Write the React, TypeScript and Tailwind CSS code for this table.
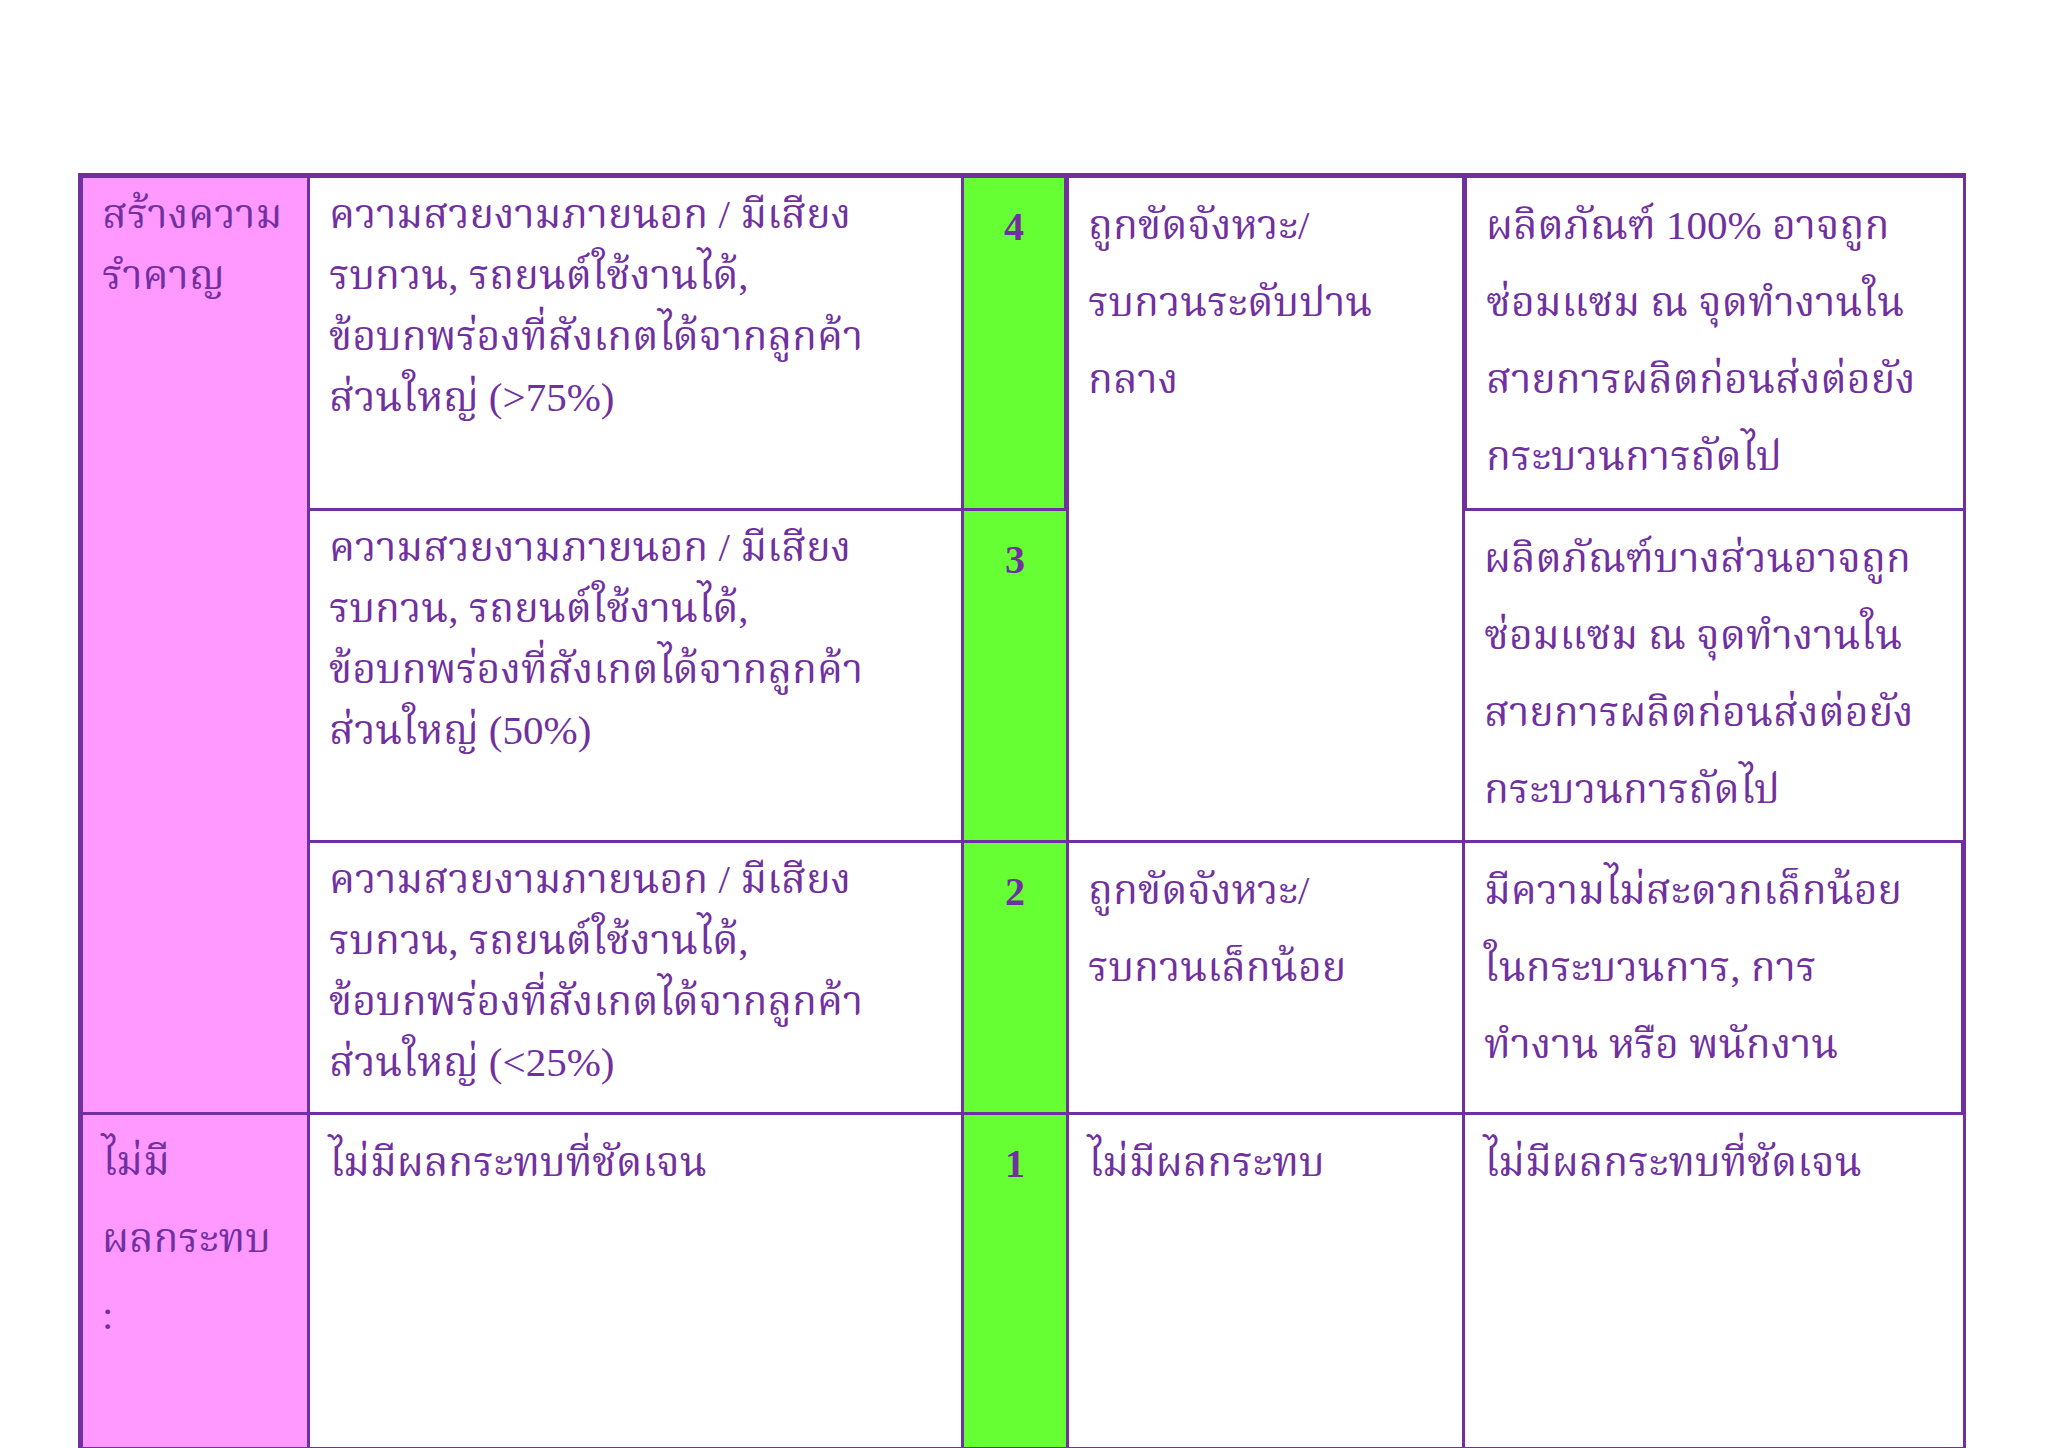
const purple = "text-[#7030A0]";

function Lines({ lines, lh }: { lines: string[]; lh: string }) {
  return (
    <div className={`${lh} whitespace-nowrap`}>
      {lines.map((l, i) => (
        <div key={i}>{l}</div>
      ))}
    </div>
  );
}

const desc = (pct: string) => [
  "ความสวยงามภายนอก / มีเสียง",
  "รบกวน, รถยนต์ใช้งานได้,",
  "ข้อบกพร่องที่สังเกตได้จากลูกค้า",
  `ส่วนใหญ่ (${pct})`,
];

const repair = (first: string) => [first, "ซ่อมแซม ณ จุดทำงานใน", "สายการผลิตก่อนส่งต่อยัง", "กระบวนการถัดไป"];

export default function App() {
  const cell = "bg-white px-[19px] pt-[9px]";
  const tightCell = "bg-white px-[19px] pt-[6px]";
  const tight = "leading-[61px]";
  const loose = "leading-[77px]";
  const num = "bg-[#66FF33] text-center pt-[10px] font-bold text-[40px] leading-[77px]";

  return (
    <div className="h-[1448px] w-[2048px] overflow-hidden bg-white">
      <div
        className={`ml-[78px] mt-[173px] grid w-[1888px] grid-cols-[224px_651px_102px_393px_498px] grid-rows-[330px_329px_269px_332px] gap-[3px] bg-[#7030A0] pt-[5px] pb-[3px] pl-[5px] pr-[3px] ${purple} text-[41px] [font-family:'Liberation_Serif','Kinnari','Norasi','Noto_Serif_Thai','Noto_Sans_Thai',serif]`}
      >
        {/* row 1 */}
        <div className="row-span-3 bg-[#FF99FF] px-[19px] pt-[6px]">
          <Lines lh={tight} lines={["สร้างความ", "รำคาญ"]} />
        </div>
        <div className={tightCell}>
          <Lines lh={tight} lines={desc(">75%")} />
        </div>
        <div className={`${num} border-r-2 border-[#7030A0]`}>4</div>
        <div className={`row-span-2 ${cell}`}>
          <Lines lh={loose} lines={["ถูกขัดจังหวะ/", "รบกวนระดับปาน", "กลาง"]} />
        </div>
        <div className={`${cell} border-l-2 border-[#7030A0]`}>
          <Lines lh={loose} lines={repair("ผลิตภัณฑ์ 100% อาจถูก")} />
        </div>

        {/* row 2 */}
        <div className={tightCell}>
          <Lines lh={tight} lines={desc("50%")} />
        </div>
        <div className={num}>3</div>
        <div className={cell}>
          <Lines lh={loose} lines={repair("ผลิตภัณฑ์บางส่วนอาจถูก")} />
        </div>

        {/* row 3 */}
        <div className={tightCell}>
          <Lines lh={tight} lines={desc("<25%")} />
        </div>
        <div className={num}>2</div>
        <div className={cell}>
          <Lines lh={loose} lines={["ถูกขัดจังหวะ/", "รบกวนเล็กน้อย"]} />
        </div>
        <div className={`${cell} border-r-2 border-[#7030A0]`}>
          <Lines lh={loose} lines={["มีความไม่สะดวกเล็กน้อย", "ในกระบวนการ, การ", "ทำงาน หรือ พนักงาน"]} />
        </div>

        {/* row 4 */}
        <div className="bg-[#FF99FF] px-[19px] pt-[8px]">
          <Lines lh={loose} lines={["ไม่มี", "ผลกระทบ", ":"]} />
        </div>
        <div className={cell}>
          <Lines lh={loose} lines={["ไม่มีผลกระทบที่ชัดเจน"]} />
        </div>
        <div className={num}>1</div>
        <div className={cell}>
          <Lines lh={loose} lines={["ไม่มีผลกระทบ"]} />
        </div>
        <div className={cell}>
          <Lines lh={loose} lines={["ไม่มีผลกระทบที่ชัดเจน"]} />
        </div>
      </div>
    </div>
  );
}
